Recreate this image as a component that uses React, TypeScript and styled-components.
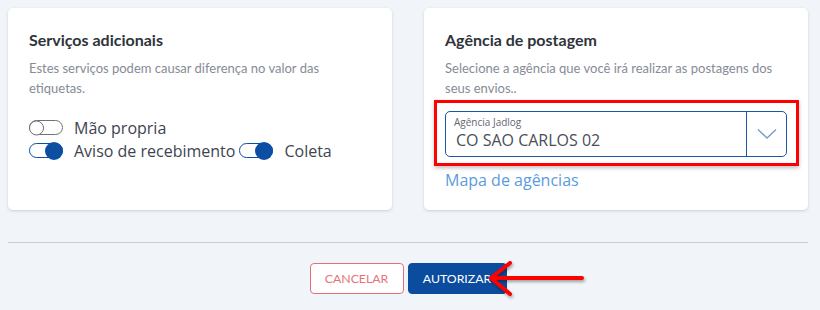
import React from "react";
import styled, { createGlobalStyle } from "styled-components";

const Global = createGlobalStyle`
  html, body { margin: 0; padding: 0; background: #f1f4f8; }
  * { box-sizing: border-box; }
`;

const Page = styled.div`
  width: 820px;
  height: 310px;
  padding: 8px 12px 0 8px;
  font-family: Lato, "Open Sans", sans-serif;
  position: relative;
  overflow: hidden;
`;

const Cards = styled.div`
  display: grid;
  grid-template-columns: 384px 384px;
  column-gap: 32px;
`;

const Card = styled.section`
  height: 202px;
  background: #fff;
  border-radius: 5px;
  box-shadow: 0 1px 3px rgba(40, 50, 70, 0.18);
  padding: 22px 21px 0 21px;
`;

const Title = styled.h3`
  margin: 0;
  font-family: Lato, sans-serif;
  font-weight: 700;
  font-size: 16px;
  line-height: 20px;
  color: #2f333b;
`;

const Desc = styled.p`
  margin: 8px 0 0 0;
  font-family: Lato, sans-serif;
  font-size: 13px;
  line-height: 20px;
  color: #868b96;
`;

const Toggles = styled.div`
  margin-top: 18px;
  display: flex;
  flex-direction: column;
`;

const ToggleRow = styled.div`
  display: flex;
  align-items: center;
  height: 23px;
  gap: 4px;
`;

const ToggleItem = styled.label`
  display: flex;
  align-items: center;
  gap: 11px;
  font-family: "Open Sans", sans-serif;
  font-size: 16px;
  color: #3e4450;
`;

const Track = styled.span<{ $on: boolean }>`
  position: relative;
  display: inline-block;
  width: 34px;
  height: 15px;
  border-radius: 8px;
  border: 1px solid ${(p) => (p.$on ? "#0b4ea2" : "#6d717a")};
`;

const Knob = styled.span<{ $on: boolean }>`
  position: absolute;
  top: 50%;
  width: ${(p) => (p.$on ? 18 : 15)}px;
  height: ${(p) => (p.$on ? 18 : 15)}px;
  border-radius: 50%;
  transform: translateY(-50%);
  ${(p) =>
    p.$on
      ? "right: -1px; background: #0b4ea2;"
      : "left: -1px; background: #fff; border: 1px solid #6d717a;"}
`;

const SelectArea = styled.div`
  position: relative;
  margin-top: 13px;
`;

const Highlight = styled.div`
  position: absolute;
  top: -11px;
  bottom: -9px;
  left: -11px;
  right: -12px;
  border: 3px solid #ff0000;
  box-shadow: 0 2px 4px rgba(0, 0, 0, 0.25);
  pointer-events: none;
`;

const Select = styled.div`
  height: 46px;
  display: flex;
  border: 1px solid #1d56a3;
  border-radius: 5px;
`;

const SelectBody = styled.div`
  flex: 1;
  padding: 4px 0 0 8px;
  display: flex;
  flex-direction: column;
`;

const SelectLabel = styled.span`
  font-family: "Open Sans", sans-serif;
  font-size: 10px;
  line-height: 13px;
  color: #646872;
`;

const SelectValue = styled.span`
  font-family: "Open Sans", sans-serif;
  font-size: 16px;
  line-height: 23px;
  color: #4a4e57;
  padding-left: 2px;
`;

const Chevron = styled.div`
  width: 40px;
  border-left: 1px solid #1d56a3;
  display: flex;
  align-items: center;
  justify-content: center;
`;

const MapLink = styled.a`
  display: block;
  margin-top: 12px;
  font-family: "Open Sans", sans-serif;
  font-size: 16px;
  line-height: 22px;
  color: #5a9be0;
  text-decoration: none;
`;

const Divider = styled.hr`
  margin: 32px 0 0 0;
  width: 800px;
  border: none;
  border-top: 1px solid #c9ccdc;
`;

const Actions = styled.div`
  width: 800px;
  margin-top: 20px;
  display: flex;
  justify-content: center;
  gap: 4px;
  position: relative;
`;

const Button = styled.button<{ $primary?: boolean }>`
  height: 31px;
  padding: 0;
  font-family: Lato, sans-serif;
  font-size: 12.3px;
  border-radius: 4px;
  cursor: pointer;
  ${(p) =>
    p.$primary
      ? "background: #0b4c9f; color: #fff; border: 1px solid #0b4c9f; width: 99px;"
      : "background: #fff; color: #e6737b; border: 1px solid #e2707a; width: 94px;"}
`;

const Arrow = styled.svg`
  position: absolute;
  left: 472px;
  top: -5px;
  overflow: visible;
  filter: drop-shadow(1px 2px 1.5px rgba(0, 0, 0, 0.35));
  pointer-events: none;
`;

function Toggle({ on, label }: { on: boolean; label: string }) {
  return (
    <ToggleItem>
      <Track $on={on}>
        <Knob $on={on} />
      </Track>
      {label}
    </ToggleItem>
  );
}

export default function App() {
  return (
    <Page>
      <Global />
      <Cards>
        <Card>
          <Title>Serviços adicionais</Title>
          <Desc>Estes serviços podem causar diferença no valor das etiquetas.</Desc>
          <Toggles>
            <ToggleRow>
              <Toggle on={false} label="Mão propria" />
            </ToggleRow>
            <ToggleRow>
              <Toggle on label="Aviso de recebimento" />
              <Toggle on label="Coleta" />
            </ToggleRow>
          </Toggles>
        </Card>
        <Card>
          <Title>Agência de postagem</Title>
          <Desc>Selecione a agência que você irá realizar as postagens dos seus envios..</Desc>
          <SelectArea>
            <Select>
              <SelectBody>
                <SelectLabel>Agência Jadlog</SelectLabel>
                <SelectValue>CO SAO CARLOS 02</SelectValue>
              </SelectBody>
              <Chevron>
                <svg width="20" height="12" viewBox="0 0 20 12">
                  <path d="M1 1.5 L10 10 L19 1.5" fill="none" stroke="#7a9cc6" strokeWidth="1.4" />
                </svg>
              </Chevron>
            </Select>
            <Highlight />
          </SelectArea>
          <MapLink href="#">Mapa de agências</MapLink>
        </Card>
      </Cards>
      <Divider />
      <Actions>
        <Button>CANCELAR</Button>
        <Button $primary>AUTORIZAR</Button>
        <Arrow width="110" height="40" viewBox="0 0 110 40">
          <g fill="none" stroke="#ff0000" strokeWidth="4" strokeLinecap="round" strokeLinejoin="round">
            <path d="M102 20 L11 20" />
            <path d="M30 5 L11 20 L30 36" />
          </g>
        </Arrow>
      </Actions>
    </Page>
  );
}
